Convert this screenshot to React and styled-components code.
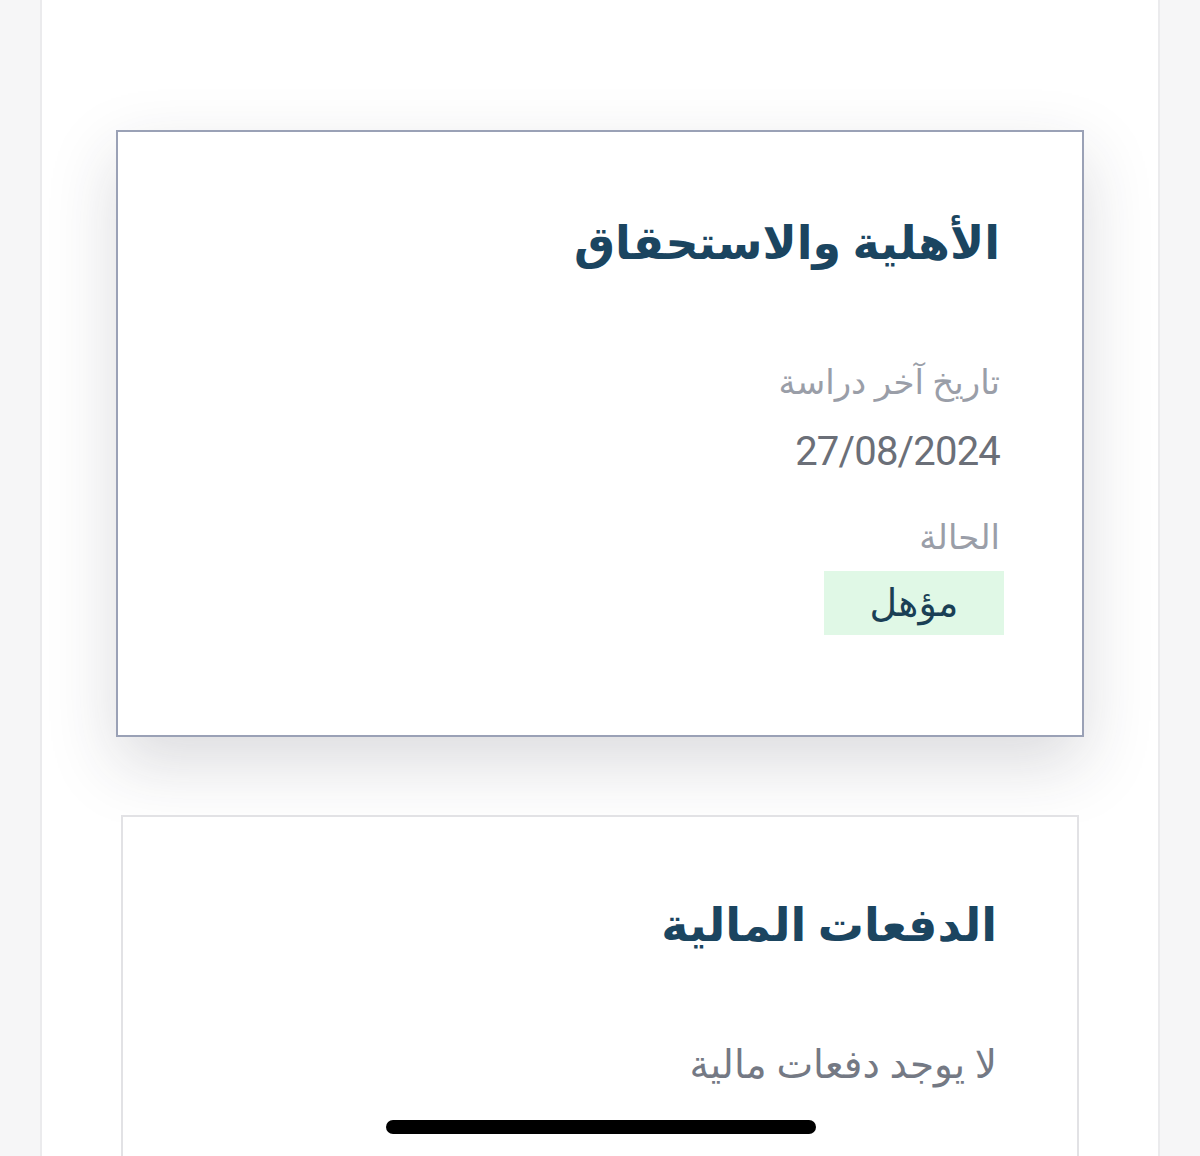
import React from 'react';
import styled, { createGlobalStyle } from 'styled-components';

const GlobalStyle = createGlobalStyle`
  html, body {
    margin: 0;
    padding: 0;
    background: #f6f6f7;
  }
  body {
    font-family: Roboto, "DejaVu Sans", sans-serif;
  }
`;

const Column = styled.main`
  position: relative;
  box-sizing: border-box;
  height: 1156px;
  margin: 0 40px;
  padding-top: 130px;
  background: #fff;
  border-left: 2px solid #ebebed;
  border-right: 2px solid #ebebed;
  overflow: hidden;
  display: flex;
  flex-direction: column;
  gap: 78px;
`;

const Card = styled.section`
  box-sizing: border-box;
  direction: rtl;
  background: #fff;
  margin: 0 ${(p) => p.$inset}px;
  padding: ${(p) => p.$pad};
  border: 2px solid ${(p) => (p.$active ? '#9aa1b6' : '#e2e2e5')};
  box-shadow: ${(p) =>
    p.$active ? '0 26px 64px rgba(40, 40, 60, 0.17)' : 'none'};
  display: flex;
  flex-direction: column;
  align-items: flex-start;
  flex-shrink: 0;
  min-height: ${(p) => p.$minHeight || 0}px;
`;

const Title = styled.h2`
  margin: 0 0 ${(p) => p.$gap}px;
  font-size: 46px;
  line-height: 64px;
  font-weight: 700;
  color: #1b4560;
`;

const Label = styled.div`
  font-size: 34px;
  line-height: 48px;
  color: #9a9ea8;
  margin-top: ${(p) => p.$top || 0}px;
`;

const Value = styled.div`
  font-size: 40px;
  line-height: 50px;
  letter-spacing: -0.8px;
  margin-top: 21px;
  color: #6b6f78;
  direction: ltr;
`;

const Badge = styled.span`
  margin-top: 10px;
  margin-right: -4px;
  box-sizing: border-box;
  width: 180px;
  height: 64px;
  display: flex;
  align-items: center;
  justify-content: center;
  background: #e0f8e6;
  color: #1a3f55;
  font-size: 38px;
`;

const Empty = styled.p`
  margin: 0;
  font-size: 39px;
  line-height: 48px;
  color: #747984;
`;

const HomeBar = styled.div`
  position: absolute;
  left: 344px;
  bottom: 22px;
  width: 430px;
  height: 14px;
  border-radius: 7px;
  background: #000;
`;

export default function App() {
  return (
    <>
      <GlobalStyle />
      <Column>
        <Card $active $inset={74} $pad="79px 82px 100px" $minHeight={607}>
          <Title $gap={83}>الأهلية والاستحقاق</Title>
          <Label>تاريخ آخر دراسة</Label>
          <Value>27/08/2024</Value>
          <Label $top={36}>الحالة</Label>
          <Badge>مؤهل</Badge>
        </Card>
        <Card $inset={79} $pad="76px 80px 100px" $minHeight={400}>
          <Title $gap={84}>الدفعات المالية</Title>
          <Empty>لا يوجد دفعات مالية</Empty>
        </Card>
        <HomeBar />
      </Column>
    </>
  );
}
